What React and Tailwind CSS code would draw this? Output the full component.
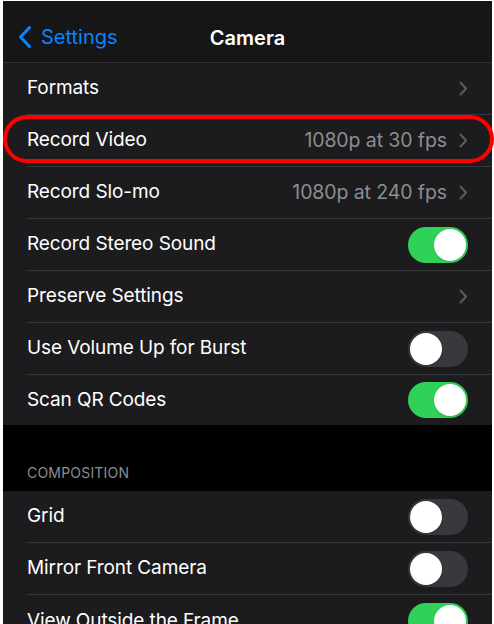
import React from "react";

const font = { fontFamily: "Inter, 'Liberation Sans', sans-serif" };

function Chevron() {
  return (
    <svg width="9" height="15" viewBox="0 0 9 15" className="shrink-0">
      <path d="M1.5 1.5 L7 7.5 L1.5 13.5" fill="none" stroke="#5b5b60" strokeWidth="2" strokeLinecap="round" strokeLinejoin="round" />
    </svg>
  );
}

function Toggle({ on }) {
  return (
    <div
      className={
        "w-[60px] h-[36px] rounded-full p-[2px] flex shrink-0 " +
        (on ? "bg-[#30d158] justify-end" : "bg-[#39393d] justify-start")
      }
    >
      <div className="w-[32px] h-[32px] rounded-full bg-white shadow" />
    </div>
  );
}

function Row({ label, value, chevron, toggle, last, short }) {
  return (
    <div className={(short ? "h-[50px]" : "h-[52px]") + " flex items-stretch pl-[24px]"}>
      <div
        className={
          "flex-1 flex items-center justify-between pr-[24px] " +
          (last ? "" : "border-b border-[#38383a]")
        }
      >
        <span className="text-[19px] text-white tracking-[-0.1px]">{label}</span>
        <div className="flex items-center gap-[12px]">
          {value && <span className="text-[19.5px] text-[#8d8d93] tracking-[-0.1px]">{value}</span>}
          {chevron && <Chevron />}
          {toggle !== undefined && <Toggle on={toggle} />}
        </div>
      </div>
    </div>
  );
}

export default function App() {
  return (
    <div className="w-[494px] h-[624px] bg-white overflow-hidden pl-[3px] pt-[1px] pr-[2px]" style={font}>
      <div className="h-full bg-black flex flex-col">
        {/* nav bar */}
        <header className="h-[62px] shrink-0 bg-[#161616] border-b border-[#2e2e30] relative flex items-center pt-[10px]">
          <div className="flex items-center pl-[14px] gap-[8px]">
            <svg width="16" height="24" viewBox="0 0 16 24">
              <path d="M12.5 2.5 L3.5 12 L12.5 21.5" fill="none" stroke="#0a84ff" strokeWidth="3" strokeLinecap="round" strokeLinejoin="round" />
            </svg>
            <span className="text-[20px] text-[#0a84ff]">Settings</span>
          </div>
          <span className="absolute left-0 right-0 top-[22px] text-center text-[20px] font-semibold text-white pointer-events-none">
            Camera
          </span>
        </header>

        {/* main group */}
        <section className="bg-[#1c1c1e] relative">
          <Row label="Formats" chevron />
          <Row label="Record Video" value="1080p at 30 fps" chevron />
          <Row label="Record Slo-mo" value="1080p at 240 fps" chevron />
          <Row label="Record Stereo Sound" toggle={true} />
          <Row label="Preserve Settings" chevron />
          <Row label="Use Volume Up for Burst" toggle={false} />
          <Row label="Scan QR Codes" toggle={true} last short />
          {/* red highlight */}
          <div className="absolute left-[0px] right-[-2px] top-[52px] h-[48px] rounded-[24px] border-[4px] border-[#ff0000] pointer-events-none" />
        </section>

        <div className="h-[66px] shrink-0 flex items-end pl-[24px] pb-[8px]">
          <span className="text-[14px] text-[#8d8d93] tracking-[0.2px]">COMPOSITION</span>
        </div>

        <section className="bg-[#1c1c1e]">
          <Row label="Grid" toggle={false} />
          <Row label="Mirror Front Camera" toggle={false} />
          <Row label="View Outside the Frame" toggle={true} last />
        </section>
      </div>
    </div>
  );
}
